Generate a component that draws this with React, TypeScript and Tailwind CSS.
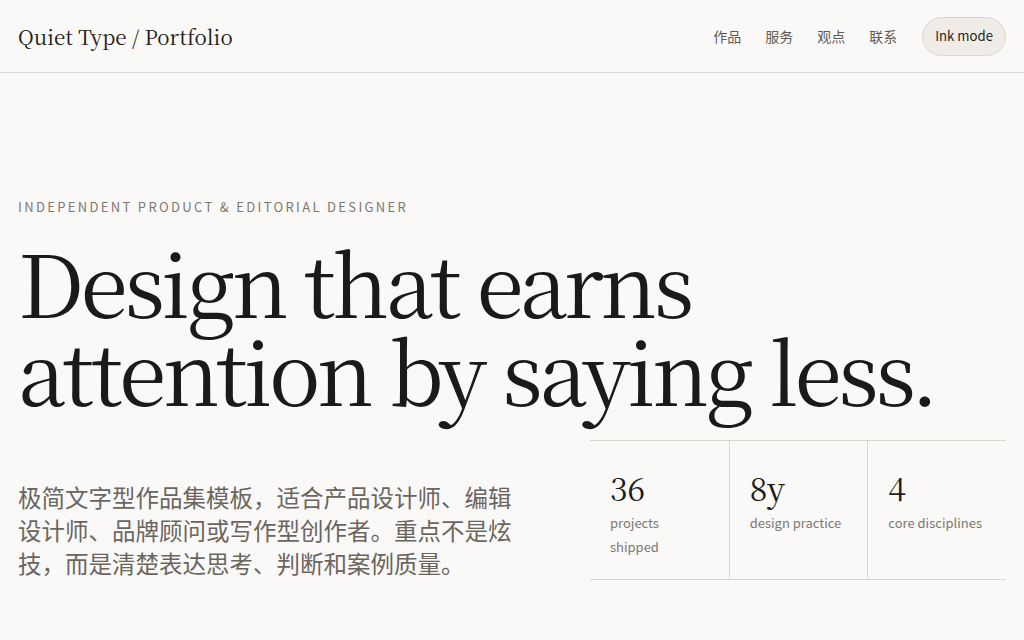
const serif = "font-['Noto_Serif_CJK_SC','Noto_Serif','Liberation_Serif',serif]";
const sans = "font-['Noto_Sans_CJK_SC','Noto_Sans',sans-serif]";

const stats = [
  { value: "36", label: "projects shipped" },
  { value: "8y", label: "design practice" },
  { value: "4", label: "core disciplines" },
];

export default function App() {
  return (
    <div className={`min-h-[640px] w-full bg-[#faf9f7] text-[#1c1a18] ${sans}`}>
      <header className="flex h-[73px] items-center justify-between border-b border-[#dcd8d3] px-[18px]">
        <div className={`${serif} text-[20.6px] text-[#1f1d1b]`}>Quiet Type / Portfolio</div>
        <nav className="flex items-center">
          <div className="flex items-center gap-[24px] text-[14px] text-[#5f5a55]">
            <a>作品</a>
            <a>服务</a>
            <a>观点</a>
            <a>联系</a>
          </div>
          <button className="ml-[25px] h-[39px] rounded-full border border-[#dcd7d0] bg-[#efece7] px-[12px] text-[13.2px] text-[#1f1d1b]">
            Ink mode
          </button>
        </nav>
      </header>

      <main className="px-[18px] pt-[124px]">
        <p className="text-[13px] uppercase tracking-[0.18em] text-[#7d7872]">
          Independent product &amp; editorial designer
        </p>
        <h1 className={`${serif} mt-[20px] text-[86px] leading-[88px] tracking-[-0.04em] text-[#1c1a18]`}>
          Design that earns
          <br />
          attention by saying less.
        </h1>

        <div className="mt-[27px] flex items-end justify-between">
          <p className="max-w-[505px] text-[23.5px] leading-[33px] text-[#6b6560]">
            极简文字型作品集模板，适合产品设计师、编辑设计师、品牌顾问或写作型创作者。重点不是炫技，而是清楚表达思考、判断和案例质量。
          </p>
          <div className="grid h-[140px] w-[416px] shrink-0 grid-cols-3 border-y border-[#dad5cf]">
            {stats.map((s, i) => (
              <div key={s.value} className={`px-[20px] pt-[26px] ${i > 0 ? "border-l border-[#dad5cf]" : ""}`}>
                <div className={`${serif} text-[32px] leading-[40px] text-[#1f1d1b]`}>{s.value}</div>
                <div className="mt-[4px] text-[13px] leading-[24px] text-[#7d7872]">{s.label}</div>
              </div>
            ))}
          </div>
        </div>
      </main>
    </div>
  );
}
